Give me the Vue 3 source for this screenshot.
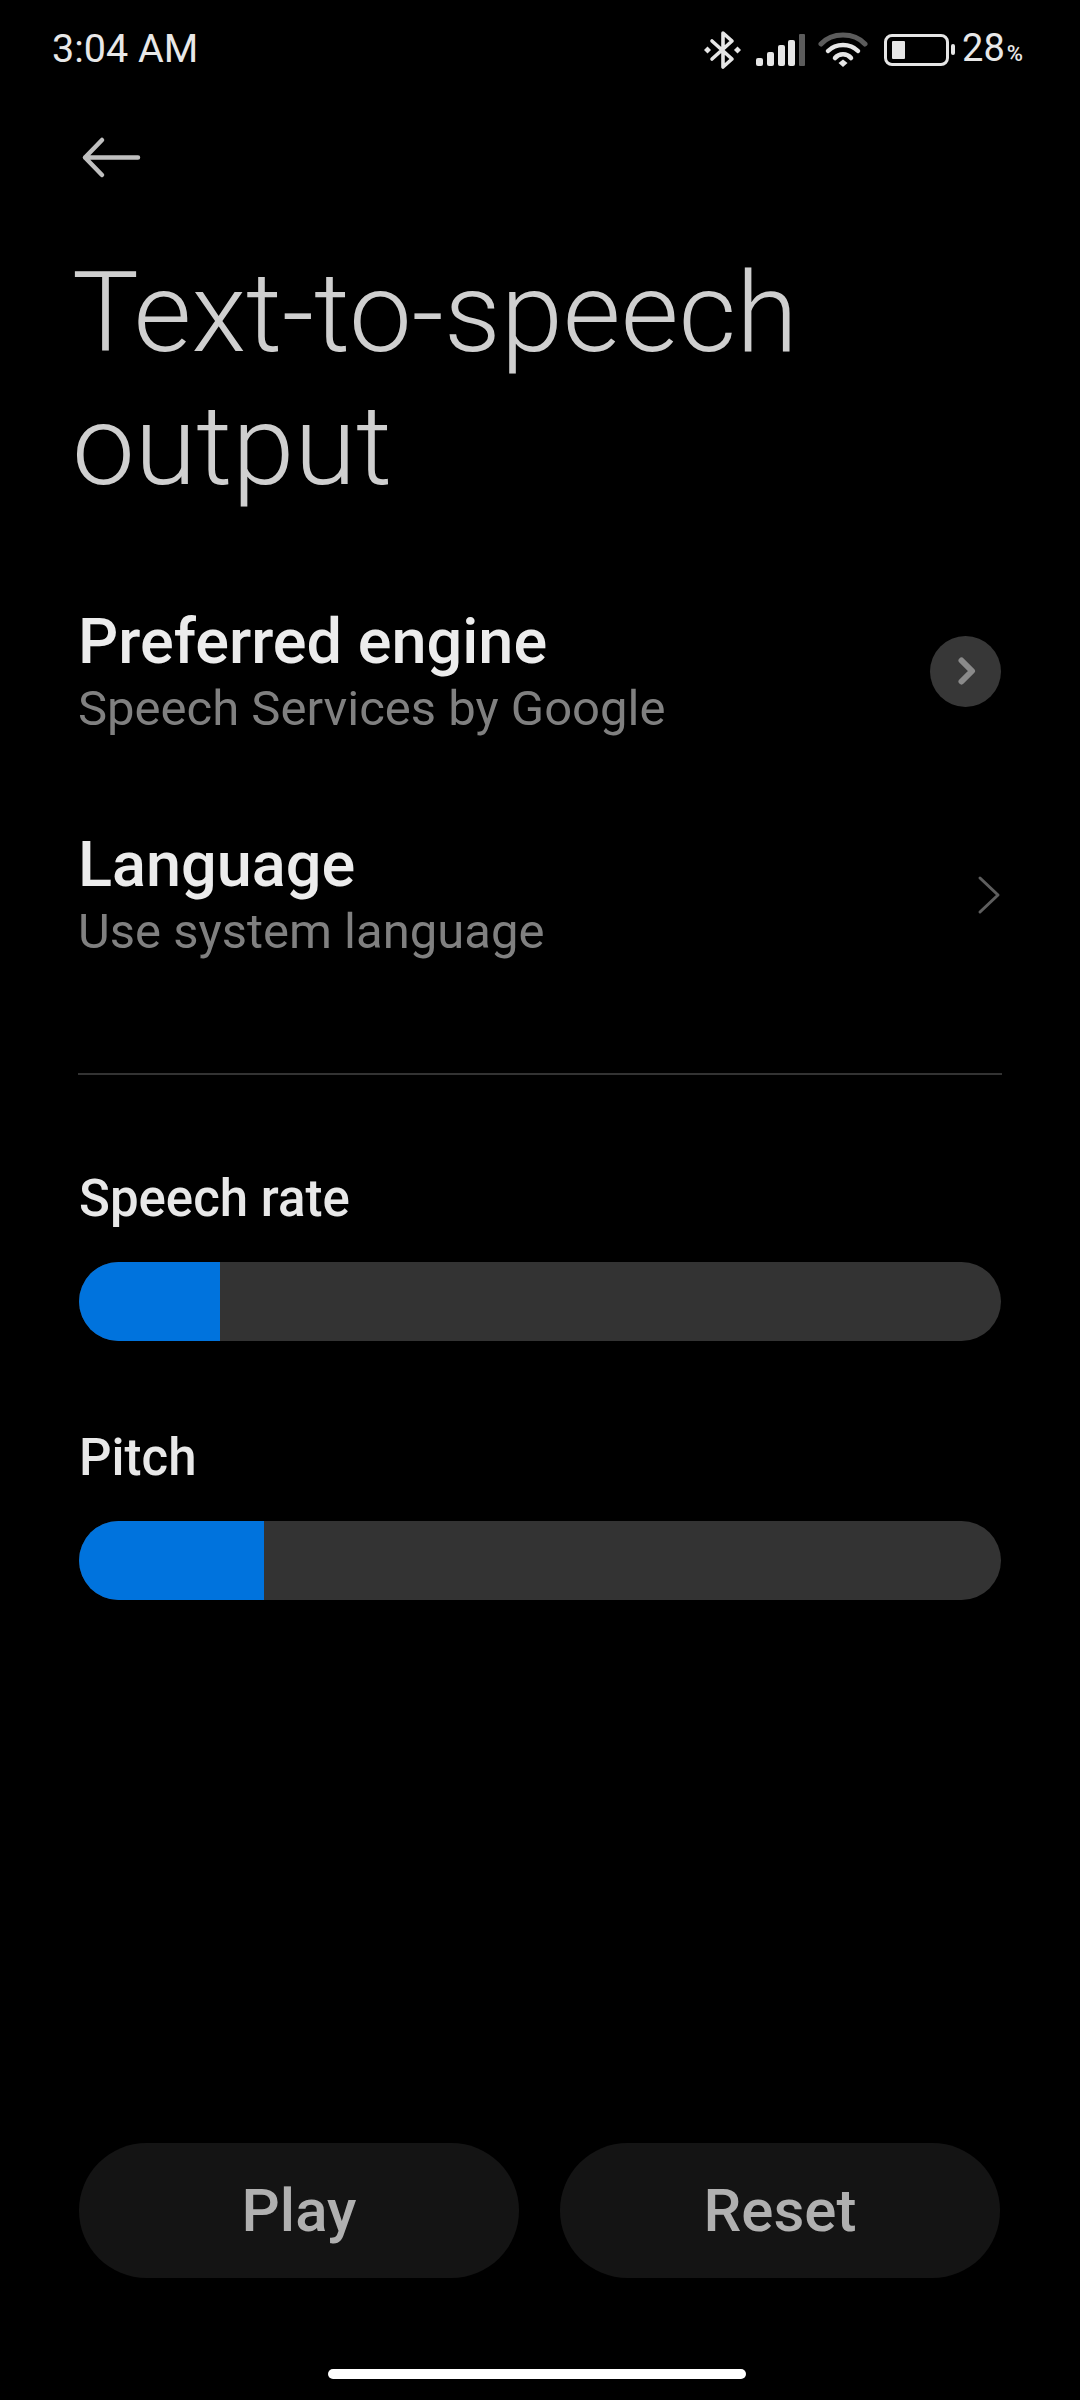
<script setup>
const sliders = [
  { label: 'Speech rate', fill: 141 },
  { label: 'Pitch', fill: 185 },
]
</script>

<template>
  <div class="screen">
    <div class="status">
      <span class="time">3:04 AM</span>
      <div class="status-icons">
        <svg class="bt" width="38" height="40" viewBox="0 0 38 40" fill="none" stroke="#e6e6e6" stroke-width="3.6" stroke-linejoin="round" stroke-linecap="round">
          <path d="M8 11 L28 29 L19 37 V3 L28 11 L8 29" />
          <rect x="1" y="17.5" width="5" height="5" fill="#e6e6e6" stroke="none" transform="rotate(45 3.5 20)" />
          <rect x="31" y="17.5" width="5" height="5" fill="#e6e6e6" stroke="none" transform="rotate(45 33.5 20)" />
        </svg>
        <svg class="signal" width="50" height="34" viewBox="0 0 50 34">
          <rect x="0" y="25" width="7" height="8" rx="2" fill="#e6e6e6" />
          <rect x="11" y="19" width="7" height="14" rx="2" fill="#e6e6e6" />
          <rect x="22" y="12" width="7" height="21" rx="2" fill="#e6e6e6" />
          <rect x="32" y="7" width="7" height="26" rx="2" fill="#e6e6e6" />
          <rect x="43" y="1" width="6" height="32" rx="1" fill="#5c5c5c" />
        </svg>
        <svg class="wifi" width="50" height="38" viewBox="0 0 50 38" fill="none" stroke-linecap="round">
          <path d="M3 13 C14 1 36 1 47 13" stroke="#5c5c5c" stroke-width="5" />
          <path d="M10 20 C18 12 32 12 40 20" stroke="#e6e6e6" stroke-width="4.5" />
          <path d="M17 27 C21 22 29 22 33 27" stroke="#e6e6e6" stroke-width="4.5" />
          <path d="M20.5 32 L25 28.5 L29.5 32 L25 36 Z" fill="#e6e6e6" />
        </svg>
        <div class="battery">
          <div class="battery-body"><div class="battery-level"></div></div>
          <div class="battery-tip"></div>
        </div>
        <span class="percent">28<small>%</small></span>
      </div>
    </div>

    <div class="back">
      <svg width="62" height="44" viewBox="0 0 62 44" fill="none" stroke="#c0c0c0" stroke-width="4.5" stroke-linecap="round" stroke-linejoin="round">
        <path d="M21 5 L4 22.5 L21 40 M4 22.5 H57" />
      </svg>
    </div>

    <h1 class="title">Text-to-speech<br>output</h1>

    <div class="rows">
      <div class="row">
        <div class="row-text">
          <div class="row-title">Preferred engine</div>
          <div class="row-sub">Speech Services by Google</div>
        </div>
        <div class="round-arrow">
          <svg width="18" height="28" viewBox="0 0 18 28" fill="none" stroke="#8a8a8a" stroke-width="6" stroke-linecap="round" stroke-linejoin="round">
            <path d="M3.5 3.5 L14 14 L3.5 24.5" />
          </svg>
        </div>
      </div>
      <div class="row">
        <div class="row-text">
          <div class="row-title">Language</div>
          <div class="row-sub">Use system language</div>
        </div>
        <svg class="chevron" width="24" height="42" viewBox="0 0 24 42" fill="none" stroke="#5e5e5e" stroke-width="3" stroke-linecap="round" stroke-linejoin="round">
          <path d="M3 4 L21 21 L3 38" />
        </svg>
      </div>
    </div>

    <div class="divider"></div>

    <div class="sliders">
      <div v-for="s in sliders" :key="s.label" class="slider-block">
        <div class="slider-label">{{ s.label }}</div>
        <div class="track">
          <div class="fill" :style="{ width: s.fill + 'px' }"></div>
        </div>
      </div>
    </div>

    <div class="spacer"></div>

    <div class="buttons">
      <button class="btn">Play</button>
      <button class="btn">Reset</button>
    </div>

    <div class="home-wrap">
      <div class="home"></div>
    </div>
  </div>
</template>

<style>
html, body {
  margin: 0;
  background: #000;
}
</style>

<style scoped>
* {
  box-sizing: border-box;
}

.screen {
  width: 1080px;
  height: 2400px;
  background: #000;
  font-family: Roboto, sans-serif;
  display: flex;
  flex-direction: column;
  color: #e6e6e6;
}

.status {
  height: 96px;
  padding: 0 57px 0 52px;
  display: flex;
  align-items: center;
  justify-content: space-between;
}

.time {
  font-size: 39.5px;
  color: #e8e8e8;
}

.status-icons {
  display: flex;
  align-items: center;
}

.bt,
.signal,
.wifi,
.battery {
  margin-top: 3px;
}

.bt {
  margin-right: 14px;
}

.signal {
  margin-right: 12px;
}

.wifi {
  margin-right: 16px;
}

.battery {
  display: flex;
  align-items: center;
  margin-right: 7px;
}

.battery-body {
  width: 65px;
  height: 32px;
  border: 3px solid #e6e6e6;
  border-radius: 8px;
  padding: 4px 5px;
}

.battery-level {
  width: 13px;
  height: 100%;
  background: #e6e6e6;
  border-radius: 1px;
}

.battery-tip {
  width: 4px;
  height: 11px;
  margin-left: 2px;
  background: #e6e6e6;
  border-radius: 2px;
}

.percent {
  font-size: 38px;
  color: #e8e8e8;
}

.percent small {
  font-size: 22px;
  font-weight: 500;
  margin-left: 2px;
}

.back {
  padding: 39px 0 0 81px;
  height: 83px;
  display: flex;
}

.title {
  margin: 67px 0 0 72px;
  font-size: 112px;
  line-height: 133px;
  font-weight: 300;
  color: #cfcfcf;
  height: 266px;
}

.rows {
  margin-top: 77px;
  display: flex;
  flex-direction: column;
  gap: 55px;
  padding: 0 79px;
}

.row {
  display: flex;
  align-items: center;
  justify-content: space-between;
  height: 168px;
}

.row-text {
  margin-left: -1px;
}

.row-title {
  font-size: 63px;
  line-height: 72px;
  font-weight: 500;
  color: #ececec;
}

.row-sub {
  font-size: 49px;
  line-height: 62px;
  color: #808080;
}

.round-arrow {
  width: 71px;
  height: 71px;
  margin-bottom: 4px;
  border-radius: 50%;
  background: #373737;
  display: flex;
  align-items: center;
  justify-content: center;
}

.round-arrow svg {
  margin-left: 2px;
}

.chevron {
  margin-bottom: 2px;
}

.divider {
  margin: 93px 78px 0;
  height: 2px;
  background: #333;
}

.sliders {
  margin-top: 94px;
  padding: 0 79px;
  display: flex;
  flex-direction: column;
  gap: 87px;
}

.slider-label {
  font-size: 51px;
  line-height: 60px;
  font-weight: 500;
  color: #e8e8e8;
  margin-bottom: 33px;
}

.track {
  height: 79px;
  border-radius: 40px;
  background: #333;
  overflow: hidden;
}

.fill {
  height: 100%;
  background: #0073dd;
}

.spacer {
  flex: 1;
}

.buttons {
  display: flex;
  gap: 41px;
  padding: 0 80px 0 79px;
}

.btn {
  flex: 1;
  height: 135px;
  border: none;
  border-radius: 68px;
  background: #141414;
  color: #b0b0b0;
  font-family: Roboto, sans-serif;
  font-size: 60px;
  font-weight: 500;
}

.home-wrap {
  height: 122px;
  display: flex;
  justify-content: center;
  padding-top: 91px;
}

.home {
  width: 418px;
  height: 10px;
  margin-left: -6px;
  border-radius: 6px;
  background: #fff;
}
</style>
